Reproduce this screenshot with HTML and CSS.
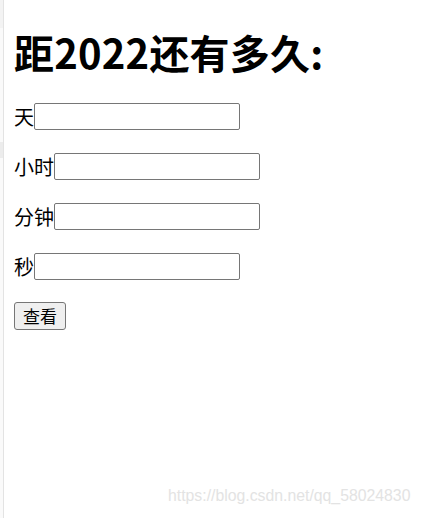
FILE: index.html
```html
<!DOCTYPE html>
<html lang="zh-CN">
<head>
<meta charset="utf-8">
<title>距2022还有多久</title>
<link rel="stylesheet" href="styles.css">
</head>
<body>
<div class="page">
  <div class="strip"><div class="tab tab-top"></div><div class="tab tab-mid"></div></div>
  <main class="content">
    <h1 class="title">距2022还有多久:</h1>
    <p class="row"><span class="label">天</span><input class="field" type="text"></p>
    <p class="row"><span class="label">小时</span><input class="field" type="text"></p>
    <p class="row"><span class="label">分钟</span><input class="field" type="text"></p>
    <p class="row"><span class="label">秒</span><input class="field" type="text"></p>
    <p class="row row-btn"><button class="btn" type="button">查看</button></p>
  </main>
</div>
<div class="watermark">https://blog.csdn.net/qq_58024830</div>
</body>
</html>
```
FILE: styles.css
```css
html, body {
  margin: 0;
  padding: 0;
  background: #ffffff;
  height: 100%;
}
body {
  font-family: "Noto Sans CJK SC", "Noto Sans", sans-serif;
  font-size: 20px;
  color: #000;
}
.page {
  display: flex;
  min-height: 100%;
}
.strip {
  width: 3px;
  border-right: 1px solid #e3e3e3;
  background: #fafafa;
  flex: none;
}
.tab {
  background: #ececec;
}
.tab-top {
  height: 28px;
  background: #f3f3f3;
}
.tab-mid {
  margin-top: 114px;
  height: 16px;
}
.content {
  padding: 0 10px;
  flex: 1;
}
.title {
  font-size: 40px;
  font-weight: bold;
  line-height: 58px;
  margin: 23px 0 18px;
  letter-spacing: 0.2px;
}
.row {
  display: flex;
  align-items: center;
  margin: 20px 0;
  height: 30px;
  line-height: 29px;
}
.row-btn {
  margin-top: 18px;
}
.label {
  font-size: 20px;
}
.field {
  box-sizing: border-box;
  width: 206px;
  height: 27px;
  border: 1px solid #767676;
  border-radius: 2px;
  padding: 0 3px;
  margin: 0;
  font-size: 16px;
  background: #fff;
}
.btn {
  box-sizing: border-box;
  width: 52px;
  height: 28px;
  padding: 0;
  margin: 0;
  font-family: "Noto Sans CJK SC", sans-serif;
  font-size: 17px;
  line-height: 26px;
  color: #000;
  background: #efefef;
  border: 1px solid #767676;
  border-radius: 3px;
}
.watermark {
  position: absolute;
  left: 168px;
  top: 487px;
  font-family: "Liberation Sans", Arial, sans-serif;
  font-size: 15.8px;
  color: #e3e3e3;
}
```
